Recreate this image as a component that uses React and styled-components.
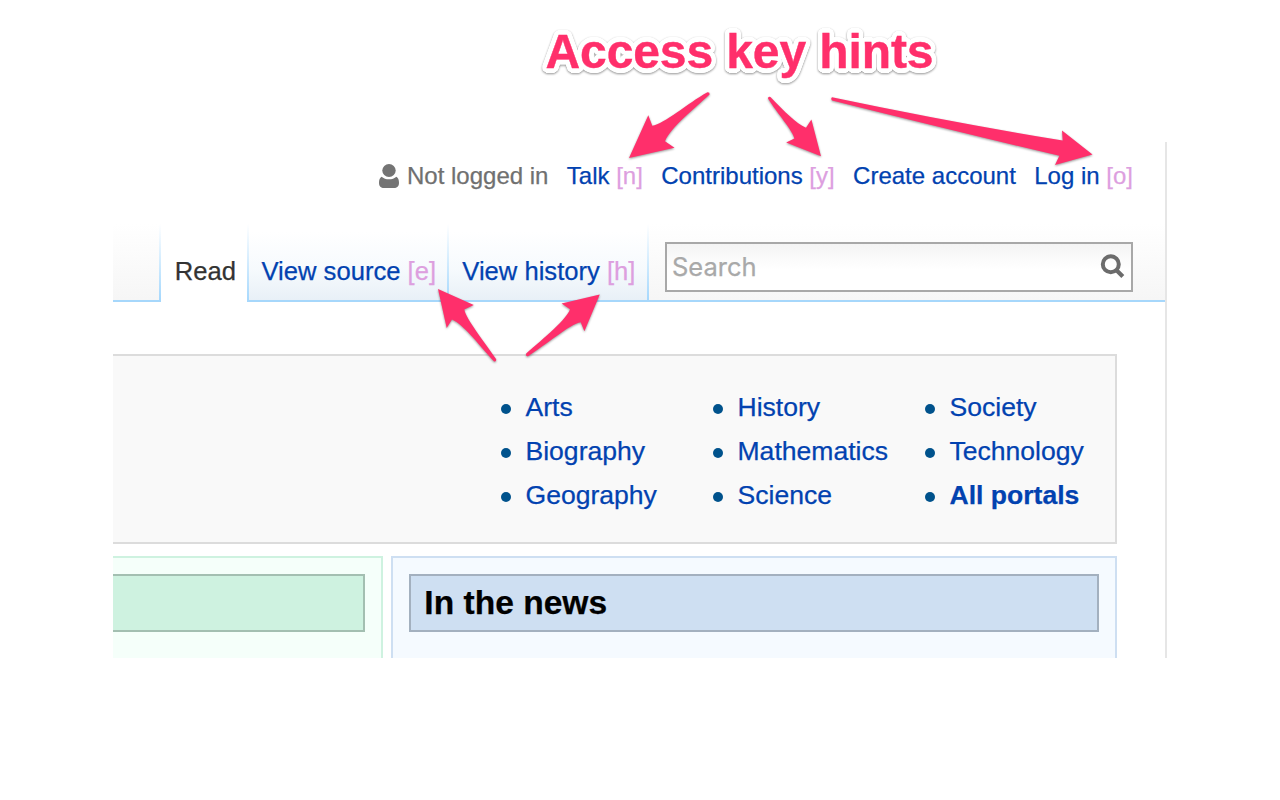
import React from 'react';
import styled, { createGlobalStyle } from 'styled-components';

const Global = createGlobalStyle`
  * { box-sizing: border-box; }
  body { margin: 0; background: #fff; font-family: "Liberation Sans", Arial, sans-serif; }
  a { color: #0242b0; text-decoration: none; }
`;

const Page = styled.main`
  position: relative;
  display: flex;
  flex-direction: column;
  width: 1280px;
  height: 800px;
  overflow: hidden;
`;

// A ring of white shadows gives the lettering a round-cornered outline.
const outline = Array.from({ length: 32 }, (_, i) => {
  const a = (i * Math.PI) / 16;
  return `${(4.6 * Math.cos(a)).toFixed(2)}px ${(4.6 * Math.sin(a)).toFixed(2)}px 0 #fff`;
}).join(', ');

const Title = styled.h1`
  margin: 0;
  height: 142px;
  padding: 24px 0 0 545.5px;
  font-size: 48px;
  line-height: 56px;
  font-weight: 700;
  letter-spacing: -0.1px;
  white-space: nowrap;
  color: #ff2f6b;
  -webkit-text-stroke: 0.4px #ff2f6b;
  text-shadow: ${outline};
  filter: drop-shadow(0 1.5px 1px rgba(0, 0, 0, 0.42));
`;

const Frame = styled.section`
  width: 1054px;
  height: 516px;
  margin-left: 113px;
  border-right: 2px solid #e6e6e6;
  display: flex;
  flex-direction: column;
  overflow: hidden;
  -webkit-text-stroke: 0.25px currentColor;
`;

const Personal = styled.nav`
  display: flex;
  height: 82px;
  padding: 20px 32px 0 0;
  justify-content: flex-end;
  gap: 18.4px;
  font-size: 24px;
  line-height: 28px;
  white-space: nowrap;
`;

const User = styled.span`
  display: flex;
  gap: 7px;
  color: #707070;
  svg { margin-top: 2px; }
`;

const Key = styled.span`
  color: #dd9fdf;
  -webkit-text-stroke: 0.25px #dd9fdf;
`;

const Header = styled.div`
  display: flex;
  height: 78px;
  background: linear-gradient(#fff, #f6f6f6) 0 0 / 100% 76px no-repeat;
`;

const edge = 'linear-gradient(#fff, #a5d8fd)';

const Spacer = styled.div`
  width: 48px;
  border-bottom: 2px solid #a6d7fb;
  background: ${edge} right top / 2px 76px no-repeat;
`;

const Tab = styled.div`
  width: ${(p) => p.$width}px;
  padding: 32px 0 0 ${(p) => p.$indent}px;
  font-size: 25.6px;
  line-height: 30px;
  white-space: nowrap;
  color: #333;
  border-bottom: ${(p) => (p.$active ? 0 : 2)}px solid #a6d7fb;
  background: ${edge} right top / 2px 100% no-repeat,
    ${(p) => (p.$active ? 'linear-gradient(#fff, #fff)' : 'linear-gradient(#fff 10%, #f6fafd 60%, #e8f0f7)')};
`;

const SearchArea = styled.div`
  flex: 1;
  padding: 18px 32px 0 16px;
  border-bottom: 2px solid #a6d7fb;
`;

const SearchBox = styled.div`
  display: flex;
  justify-content: space-between;
  height: 50px;
  padding: 0 6px 0 5px;
  border: 2px solid #a8a8a8;
  background: linear-gradient(#f4f4f4, #fff 55%);
  font: 25.5px/46px Inter, sans-serif;
  color: #a9a9a9;
  svg { margin-top: 9px; }
`;

const Portals = styled.div`
  display: flex;
  justify-content: flex-end;
  width: 1004px;
  height: 190px;
  margin-top: 52px;
  padding: 29px 0 0;
  border: 2px solid #dcdcdc;
  border-left: 0;
  background: #f9f9f9;
`;

const PortalList = styled.ul`
  width: ${(p) => p.$width}px;
  margin: 0;
  padding: 0;
  list-style: none;
`;

const Portal = styled.li`
  display: flex;
  align-items: center;
  gap: 14.5px;
  height: 44px;
  font-size: 26.55px;
  line-height: 44px;
  font-weight: ${(p) => (p.$strong ? 700 : 400)};
  &::before {
    content: '';
    width: 10px;
    height: 10px;
    margin-top: 4px;
    border-radius: 50%;
    background: #00528c;
  }
`;

const Columns = styled.div`
  display: flex;
  gap: 8px;
  height: 102px;
  margin-top: 12px;
`;

const Panel = styled.section`
  width: ${(p) => p.$width}px;
  padding: 16px 16px 0 ${(p) => (p.$cut ? 0 : 16)}px;
  border: 2px solid ${(p) => p.$line};
  border-bottom: 0;
  border-left-width: ${(p) => (p.$cut ? 0 : 2)}px;
  background: ${(p) => p.$fill};
`;

const Heading = styled.h2`
  height: 58px;
  margin: 0;
  padding-left: 13.3px;
  font-size: 33.6px;
  line-height: 54px;
  color: #000;
  border: 2px solid ${(p) => p.$line};
  border-left-width: ${(p) => (p.$cut ? 0 : 2)}px;
  background: ${(p) => p.$fill};
`;

const Arrows = styled.svg`
  position: absolute;
  inset: 0;
  fill: #ff2f6b;
  pointer-events: none;
  filter: drop-shadow(0 1.5px 1px rgba(0, 0, 0, 0.4));
`;

const portals = [
  { width: 212, items: ['Arts', 'Biography', 'Geography'] },
  { width: 212, items: ['History', 'Mathematics', 'Science'] },
  { width: 190, items: ['Society', 'Technology', 'All portals'] },
];

const arrows = [
  'M629 158L648.3 115.3L652.3 125.7C664 124 688 103 707 92.4Q710 92 709.6 94.5C694 109 671 127 665 141.3L674.5 147.7Z',
  'M768 98.5Q768 96 770.4 96.9C785 112 796 123 806 127.8L811.4 119.5L821 156.3L786.2 142.4L794.4 138.5C793 131 777 113 768 98.5Z',
  'M832 97.2Q950 122 1062.7 140.5L1062 130.5L1092.5 154.5L1055 165.1L1059.4 155.8Q950 130 832 100.5Q830.5 98.5 832 97.2Z',
  'M438 289L473.8 305L464.3 309.6C466 319 485 343 496.2 359.2Q496.5 362 493.8 361.2C477 343 464 325 452 319.6L446.7 328Z',
  'M599.8 294.5L561.6 303.4L570 309.3C567 319 544 338 526.2 353.6Q525.4 356.5 528 356.2C546 345 570 324 580.7 322.3L584.4 331.3Z',
];

export default function App() {
  return (
    <Page>
      <Global />
      <Title>Access key hints</Title>
      <Frame>
        <Personal>
          <User>
            <svg width="22" height="26" viewBox="0 0 22 26" fill="#747474">
              <path d="M3.6 12.8C1.8 13.8 1 16 1 18.8C1 22.5 3 24 6 24H16C19 24 21 22.5 21 18.8C21 16 20.2 13.8 18.4 12.8C14.8 16.2 7.2 16.2 3.6 12.8Z" />
              <ellipse cx="11" cy="6.5" rx="6.7" ry="6.5" />
            </svg>
            Not logged in
          </User>
          <a>Talk <Key>[n]</Key></a>
          <a>Contributions <Key>[y]</Key></a>
          <a>Create account</a>
          <a>Log in <Key>[o]</Key></a>
        </Personal>
        <Header>
          <Spacer />
          <Tab $width={88} $indent={13.7} $active>Read</Tab>
          <Tab $width={200} $indent={12.5}><a>View source <Key>[e]</Key></a></Tab>
          <Tab $width={200} $indent={13.3}><a>View history <Key>[h]</Key></a></Tab>
          <SearchArea>
            <SearchBox>
              Search
              <svg width="26" height="28" viewBox="0 0 26 28" fill="none" stroke="#6b6b6b">
                <circle cx="11.8" cy="11.2" r="8" strokeWidth="4" />
                <path d="M17.3 16.9L23.8 23.4" strokeWidth="4.2" />
              </svg>
            </SearchBox>
          </SearchArea>
        </Header>
        <Portals>
          {portals.map((list) => (
            <PortalList key={list.items[0]} $width={list.width}>
              {list.items.map((name) => (
                <Portal key={name} $strong={name === 'All portals'}><a>{name}</a></Portal>
              ))}
            </PortalList>
          ))}
        </Portals>
        <Columns>
          <Panel $width={270} $cut $line="#cef2e0" $fill="#f5fffa">
            <Heading $cut $line="#a3bfb1" $fill="#cef2e0" />
          </Panel>
          <Panel $width={726} $line="#cedff2" $fill="#f5faff">
            <Heading $line="#a3b0bf" $fill="#cedff2">In the news</Heading>
          </Panel>
        </Columns>
      </Frame>
      <Arrows width="1280" height="800" viewBox="0 0 1280 800">
        {arrows.map((d) => <path key={d} d={d} />)}
      </Arrows>
    </Page>
  );
}
